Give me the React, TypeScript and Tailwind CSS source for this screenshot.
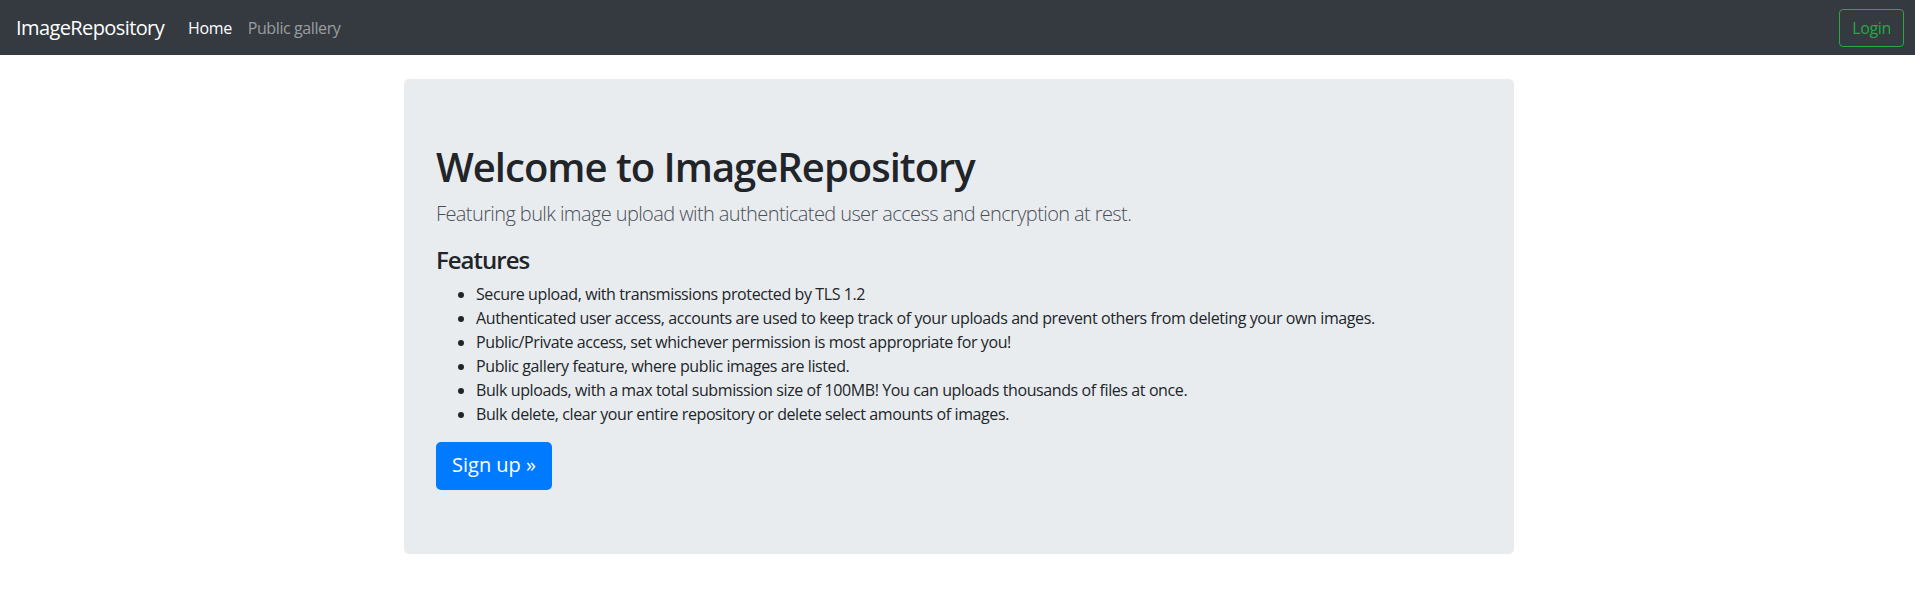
import React from 'react';

const features = [
  'Secure upload, with transmissions protected by TLS 1.2',
  'Authenticated user access, accounts are used to keep track of your uploads and prevent others from deleting your own images.',
  'Public/Private access, set whichever permission is most appropriate for you!',
  'Public gallery feature, where public images are listed.',
  'Bulk uploads, with a max total submission size of 100MB! You can uploads thousands of files at once.',
  'Bulk delete, clear your entire repository or delete select amounts of images.',
];

const Navbar: React.FC = () => (
  <nav className="flex items-center h-[55px] pl-4 pr-[11px] bg-[#343a40]">
    <a href="#" className="text-[20px] leading-[30px] tracking-[-0.6px] text-white mr-4">
      ImageRepository
    </a>
    <ul className="flex items-center tracking-[-0.4px]">
      <li>
        <a href="#" className="block px-2 py-2 text-[16px] leading-6 text-white">
          Home
        </a>
      </li>
      <li>
        <a href="#" className="block px-2 py-2 text-[16px] leading-6 text-white/50">
          Public gallery
        </a>
      </li>
    </ul>
    <button className="ml-auto h-[38px] px-3 text-[16px] leading-6 tracking-[-0.35px] text-[#28a745] border border-[#28a745] rounded-[4px]">
      Login
    </button>
  </nav>
);

export default function App() {
  return (
    <div className="min-h-[606px] bg-white text-[#212529] font-['Open_Sans','Noto_Sans',sans-serif]">
      <Navbar />
      <main className="flex justify-center pl-[3px] mt-6">
        <div className="w-[1110px] bg-[#e9ecef] rounded-[5px] px-8 py-16">
          <h1 className="text-[40px] leading-[48px] font-semibold tracking-[-1px] mb-2">
            Welcome to ImageRepository
          </h1>
          <p className="text-[20px] leading-[30px] font-light tracking-[-0.6px] text-[#495057] mb-4">
            Featuring bulk image upload with authenticated user access and encryption at rest.
          </p>
          <h4 className="text-[24px] leading-[29px] font-semibold tracking-[-1px] mb-2">Features</h4>
          <ul className="list-disc pl-10 text-[16px] leading-6 tracking-[-0.4px] mb-4">
            {features.map((f, i) => (
              <li key={i}>{f}</li>
            ))}
          </ul>
          <a
            href="#"
            className="inline-block h-12 px-4 py-2 text-[20px] leading-[30px] text-white bg-[#007bff] rounded-[5px]"
          >
            Sign up &raquo;
          </a>
        </div>
      </main>
    </div>
  );
}
